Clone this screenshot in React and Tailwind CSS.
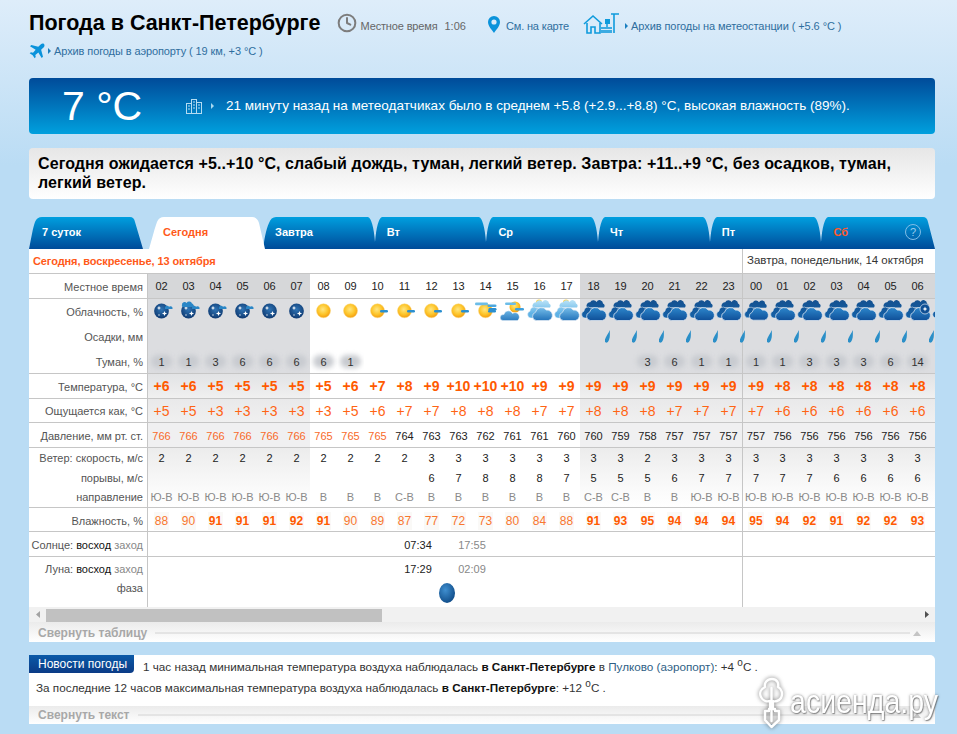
import React from 'react';
import { Clock } from 'lucide-react';

const hours = ['02','03','04','05','06','07','08','09','10','11','12','13','14','15','16','17','18','19','20','21','22','23','00','01','02','03','04','05','06','07'];
const sky = ['mc','mc2','mc','mc','m','m','s','s','sc','sc','sc','sc','sc2','sb','l','l','d','d','d','d','d','d','d','d','d','d','d','d','dm','dm'];
const fog = {0:1,1:1,2:3,3:6,4:6,5:6,6:6,7:1,18:3,19:6,20:1,21:1,22:1,23:1,24:3,25:3,26:3,27:6,28:14};
const temp = [6,6,5,5,5,5,5,6,7,8,9,10,10,10,9,9,9,9,9,9,9,9,9,8,8,8,8,8,8,8];
const feels = [5,5,3,3,3,3,3,5,6,7,7,8,8,8,7,7,8,8,8,7,7,7,7,6,6,6,6,6,6,6];
const press = [766,766,766,766,766,766,765,765,765,764,763,763,762,761,761,760,760,759,758,757,757,757,757,756,756,756,756,756,756,756];
const speed = [2,2,2,2,2,2,2,2,2,2,3,3,3,3,3,3,3,3,2,3,3,3,3,3,3,3,3,3,3,3];
const gust = ['','','','','','','','','','',6,7,8,8,8,7,5,5,5,6,7,7,7,7,7,6,6,6,6,6];
const dirs = ['Ю-В','Ю-В','Ю-В','Ю-В','Ю-В','Ю-В','В','В','В','С-В','В','В','В','В','В','В','С-В','С-В','В','В','Ю-В','Ю-В','Ю-В','Ю-В','Ю-В','Ю-В','Ю-В','Ю-В','Ю-В','Ю-В'];
const hum = [88,90,91,91,91,92,91,90,89,87,77,72,73,80,84,88,91,93,95,94,94,94,95,94,92,91,92,92,93,93];

const isNight = (i) => i < 6 || i >= 16;

function Defs() {
  return (
    <svg width="0" height="0" className="block h-0 w-0">
      <defs>
        <radialGradient id="sun" cx="45%" cy="40%" r="60%">
          <stop offset="0" stopColor="#ffe680" />
          <stop offset="0.6" stopColor="#fdc52a" />
          <stop offset="1" stopColor="#f49c10" />
        </radialGradient>
        <radialGradient id="moon" cx="50%" cy="40%" r="60%">
          <stop offset="0" stopColor="#2f74b5" />
          <stop offset="1" stopColor="#0f3a72" />
        </radialGradient>
        <linearGradient id="dk" gradientUnits="userSpaceOnUse" x1="0" y1="2" x2="0" y2="24">
          <stop offset="0" stopColor="#14508f" />
          <stop offset="1" stopColor="#1565ad" />
        </linearGradient>
        <linearGradient id="dk2" gradientUnits="userSpaceOnUse" x1="0" y1="9" x2="0" y2="24">
          <stop offset="0" stopColor="#2f8bd0" />
          <stop offset="1" stopColor="#0d4b94" />
        </linearGradient>
        <linearGradient id="lt" gradientUnits="userSpaceOnUse" x1="0" y1="2" x2="0" y2="16">
          <stop offset="0" stopColor="#bfe6f8" />
          <stop offset="1" stopColor="#5fb2e6" />
        </linearGradient>
        <linearGradient id="lt2" gradientUnits="userSpaceOnUse" x1="0" y1="9" x2="0" y2="24">
          <stop offset="0" stopColor="#7cc4ee" />
          <stop offset="1" stopColor="#1d6db6" />
        </linearGradient>
        <radialGradient id="ball" cx="40%" cy="35%" r="70%">
          <stop offset="0" stopColor="#3f8fd0" />
          <stop offset="1" stopColor="#0e4a86" />
        </radialGradient>
      </defs>
    </svg>
  );
}

function Spark({ x, y, r }) {
  const k = r * 0.28;
  return <path d={`M${x} ${y - r}L${x + k} ${y - k}L${x + r} ${y}L${x + k} ${y + k}L${x} ${y + r}L${x - k} ${y + k}L${x - r} ${y}L${x - k} ${y - k}Z`} fill="#fff" />;
}

function SmallBar({ x, y, w = 8, c = '#2a8fd0' }) {
  return <rect x={x} y={y} width={w} height="2.6" rx="1.3" fill={c} />;
}

function Cloud({ a, b }) {
  return (
    <g transform="translate(0 -1.5)">
      <path d="M7 10a3.4 3.4 0 0 1 3.2-5.2a3.6 3.6 0 0 1 6.4-.4a3.4 3.4 0 0 1 6.4 1.6a2.8 2.8 0 0 1 1 4Z" fill={a} />
      <path d="M5 20.5a3.5 3.5 0 0 1-1-6.8a4 4 0 0 1 6.6-3.2h5V20.5Z" fill={a} stroke="#e8eef5" strokeWidth="0.5" />
      <path d="M10.5 23a4.2 4.2 0 0 1-1-8.2a6 6 0 0 1 10.8-2.2a5.3 5.3 0 0 1 2 10.4Z" fill={b} stroke="#e8eef5" strokeWidth="0.7" />
    </g>
  );
}

function Sky({ t }) {
  return (
    <svg viewBox="0 0 27 25" className="block h-[25px] w-[27px]" aria-hidden="true">
      {(t === 'm' || t === 'mc' || t === 'mc2') && (
        <g>
          <circle cx="13.5" cy="12" r="7.4" fill="url(#moon)" />
          <Spark x={11} y={9} r={2.2} />
          <Spark x={16.5} y={14.5} r={2.6} />
          <Spark x={11} y={16} r={1.2} />
        </g>
      )}
      {(t === 'mc' || t === 'mc2') && <path d="M17 8.5a2.2 2.2 0 0 1 4-.8a2.2 2.2 0 0 1 3.5 2.3h-7.5Z" fill="#2a86c6" />}
      {t === 'mc2' && <path d="M7 6a2.6 2.6 0 0 1 4.6-2a3 3 0 0 1 5.4.6a2 2 0 0 1 1 3.4H7.5a1.5 1.5 0 0 1-.5-2Z" fill="#2a86c6" />}
      {(t === 's' || t === 'sc' || t === 'sc2') && <circle cx="13.5" cy="11.8" r="7" fill="url(#sun)" stroke="#fbd979" strokeWidth="0.5" />}
      {(t === 'sc' || t === 'sc2') && <SmallBar x="16" y="11" w="8" />}
      {t === 'sc2' && <g><SmallBar x="3" y="3.6" w="13" c="#6cbde8" /><SmallBar x="15.5" y="5.5" w="9" c="#4ba6dd" /><SmallBar x="16.5" y="9" w="8" /></g>}
      {t === 'sb' && (
        <g>
          <circle cx="16" cy="8" r="5.5" fill="url(#sun)" />
          <SmallBar x="6" y="3.5" w="11" c="#6cbde8" />
          <SmallBar x="16" y="9" w="9" c="#3fa0dc" />
          <path d="M4 21.5a3 3 0 0 1 .5-6h.5a4.5 4.5 0 0 1 8.5-1a4 4 0 0 1 5 7Z" fill="url(#lt2)" stroke="#fff" strokeWidth="0.4" />
        </g>
      )}
      {t === 'l' && (
        <g>
          <circle cx="13" cy="3.5" r="3" fill="#fcd24a" />
          <Cloud a="url(#lt)" b="url(#lt2)" />
        </g>
      )}
      {(t === 'd' || t === 'dm') && (
        <g>
          <Cloud a="url(#dk)" b="url(#dk2)" />
          {t === 'dm' && <g><circle cx="21" cy="10" r="5" fill="#0f4f94" stroke="#dfe7f0" strokeWidth="0.7" /><Spark x={21} y={10} r={2.4} /></g>}
        </g>
      )}
    </svg>
  );
}

function Tri({ c = '#1a7fc0' }) {
  return (
    <svg viewBox="0 0 3 6" className="h-[6px] w-[3px] shrink-0" aria-hidden="true">
      <path d="M0 0L3 3L0 6Z" fill={c} />
    </svg>
  );
}

function Row({ label, h, bg, last, cell, pad = '', lpad = '', showLast = false }) {
  return (
    <div className={`flex ${h} ${last ? 'border-b border-[#c6c6c6]' : ''}`}>
      <div className={`flex w-[119px] shrink-0 items-center justify-end whitespace-nowrap border-r border-[#c6c6c6] bg-white pr-[4px] text-[11px] text-[#555] ${lpad}`}>
        {label}
      </div>
      {hours.map((_, i) => (
        <div
          key={i}
          className={`relative flex w-[27px] shrink-0 items-center justify-center whitespace-nowrap ${pad} ${isNight(i) ? bg : 'bg-white'} ${i === 22 ? 'border-l border-[#c6c6c6]' : ''}`}
        >
          {i === 29 && !showLast ? null : cell(i)}
        </div>
      ))}
    </div>
  );
}

function Collapse({ text, h }) {
  return (
    <div className={`flex items-center bg-gradient-to-b from-[#ebebeb] to-white pl-[9px] pr-[14px] ${h}`}>
      <span className="whitespace-nowrap text-[12px] font-bold text-[#a8a8a8]">{text}</span>
      <span className="ml-[8px] h-[2px] flex-1 border-y border-[#e4e4e4] bg-white" />
      <svg viewBox="0 0 8 5" className="ml-[3px] h-[5px] w-[8px]" aria-hidden="true"><path d="M0 5L4 0L8 5Z" fill="#c4c4c4" /></svg>
    </div>
  );
}

export default function App() {
  return (
    <div className="relative h-[734px] w-[957px] overflow-hidden bg-[linear-gradient(#deedfa,#badcf4_165px)] pl-[29px] pr-[22px] pt-[10px] font-['Liberation_Sans',Arial,sans-serif] text-[#222]">
      <Defs />
      <div className="flex h-[26px] items-center whitespace-nowrap">
        <h1 className="text-[21.5px] font-bold leading-[26px] text-black">Погода в Санкт-Петербурге</h1>
        <Clock className="ml-[16px] h-[20px] w-[20px] text-[#7d7d7d]" strokeWidth={2.4} />
        <span className="ml-[4px] mt-[7px] text-[11px] tracking-[-0.15px] text-[#666]">Местное время</span>
        <span className="ml-[7px] mt-[7px] text-[11px] text-[#666]">1:06</span>
        <svg viewBox="0 0 12 17" className="ml-[22px] mt-[2px] h-[17px] w-[12px]" aria-hidden="true">
          <path fillRule="evenodd" d="M6 0a6 6 0 0 1 6 6c0 4-4 8-6 11C4 14 0 10 0 6a6 6 0 0 1 6-6Zm0 3.4a2.6 2.6 0 1 0 0 5.2a2.6 2.6 0 0 0 0-5.2Z" fill="#0a93db" />
        </svg>
        <span className="ml-[6px] mt-[7px] text-[11px] tracking-[-0.15px] text-[#2f6e9e]">См. на карте</span>
        <svg viewBox="0 0 38 21" className="ml-[14px] mt-[1px] h-[21px] w-[38px]" aria-hidden="true">
          <g fill="none" stroke="#0f9bdc" strokeWidth="1.6">
            <path d="M1 11L10 3L19 11" />
            <path d="M4 10V20H8V14H12V20H17V10" />
            <path d="M31 1V20M28 1H36" />
          </g>
          <rect x="22" y="6" width="5" height="5" fill="#0f9bdc" />
          <path d="M24 11V14" stroke="#0f9bdc" strokeWidth="1.5" />
          <g fill="#3cabe2"><rect x="18" y="14" width="11" height="2" /><rect x="18" y="17" width="11" height="3" /></g>
        </svg>
        <span className="ml-[4px] mt-[6px]"><Tri /></span>
        <span className="ml-[3px] mt-[7px] text-[11px] tracking-[-0.08px] text-[#2f6e9e]">Архив погоды на метеостанции ( +5.6 °C )</span>
      </div>

      <div className="mt-[8px] flex h-[14px] items-center whitespace-nowrap">
        <svg viewBox="0 0 24 24" className="h-[16px] w-[16px]" aria-hidden="true">
          <path d="M22.5 1.5c-1.2-1.2-3.4-.9-4.6.3l-4 4L3.5 3L1.5 5l8.5 5l-4 4.5l-3-.6L1 15.5l4.5 3L8.5 23l1.6-1.9l-.6-3l4.5-4l5 8.5l2-2l-2.8-10.4l4-4c1.2-1.2 1.5-3.4.3-4.7Z" fill="#0a93db" />
        </svg>
        <span className="ml-[3px]"><Tri /></span>
        <span className="ml-[3px] text-[11px] tracking-[-0.1px] text-[#2f6e9e]">Архив погоды в аэропорту ( 19 км, +3 °C )</span>
      </div>

      <div className="mt-[20px] flex h-[56px] items-center whitespace-nowrap rounded-[4px] bg-gradient-to-b from-[#004b99] to-[#00a0de] text-white">
        <span className="ml-[33px] w-[124px] text-[41px] leading-none">7 °C</span>
        <svg viewBox="0 0 16 15" className="h-[15px] w-[16px]" aria-hidden="true">
          <g fill="none" stroke="#b4dcf2" strokeWidth="1">
            <rect x="0.5" y="4.5" width="5" height="10" />
            <rect x="5.5" y="0.5" width="5" height="14" />
            <rect x="10.5" y="3.5" width="5" height="11" />
            <path d="M2 7h2M2 10h2M7 3h2M7 6h2M7 9h2M12 6h2M12 9h2" />
          </g>
        </svg>
        <span className="ml-[9px]"><Tri c="#a8d8f0" /></span>
        <span className="ml-[12px] text-[13.5px]">21 минуту назад на метеодатчиках было в среднем +5.8 (+2.9...+8.8) °C, высокая влажность (89%).</span>
      </div>

      <div className="mt-[14px] h-[51px] rounded-[4px] bg-gradient-to-b from-[#e6e6e6] to-white px-[9px] pt-[6px] text-[16px] font-bold leading-[19px] tracking-[0.09px] text-black">
        Сегодня ожидается +5..+10 °C, слабый дождь, туман, легкий ветер. Завтра: +11..+9 °C, без осадков, туман, легкий ветер.
      </div>

      <div className="mt-[18px] flex h-[32px] text-[11px] font-bold">
        <div className="flex w-[114px] shrink-0 items-center bg-gradient-to-b from-[#009fdf] to-[#004b99] pb-[2px] pl-[13px] text-white [clip-path:path('M0_32C2_22_4_10_6_5Q8_0_13_0L101_0Q105_0_106_5L114_32Z')]">
          7 суток
        </div>
        <div className="relative z-10 ml-[6px] flex w-[116px] shrink-0 items-center bg-white pb-[2px] pl-[14px] text-[#ff5a1a] [clip-path:path('M0_32C3_22_6_10_8_5Q10_0_15_0L103_0Q108_0_110_6L116_32Z')]">
          Сегодня
        </div>
        <div className="-ml-[2px] flex flex-1 bg-gradient-to-b from-[#009fdf] to-[#004b99] text-white [clip-path:path('M0_32C1_24_3_12_6_6Q8_0_13_0L660_0Q664_0_665_5L672_32Z')]">
          {['Завтра', 'Вт', 'Ср', 'Чт', 'Пт', 'Сб'].map((t, i) => (
            <div key={t} className={`relative flex items-center pb-[2px] pl-[12px] ${i === 5 ? 'flex-1' : 'w-[111.7px]'}`}>
              <span className={i === 5 ? 'text-[#ff5a2a]' : ''}>{t}</span>
              {i < 5 && (
                <svg viewBox="0 0 14 25" className="absolute -right-[7px] top-0 h-[25px] w-[14px]" aria-hidden="true">
                  <path d="M0 0Q5 2 7 25Q9 2 14 0Z" fill="#badcf4" />
                </svg>
              )}
              {i === 5 && (
                <span className="absolute right-[14px] top-[7px] flex h-[16px] w-[16px] items-center justify-center rounded-full border border-[#7fbde6] text-[11px] font-normal text-[#9ccbec]">?</span>
              )}
            </div>
          ))}
        </div>
      </div>

      <div className="overflow-hidden bg-white">
        <div className="flex h-[25px] items-center border-b border-[#c6c6c6]">
          <div className="w-[713px] shrink-0 whitespace-nowrap pl-[4px] text-[11px] font-bold tracking-[-0.1px] text-[#ff5a1a]">Сегодня, воскресенье, 13 октября</div>
          <div className="flex h-full flex-1 items-center whitespace-nowrap border-l border-[#c6c6c6] pl-[4px] text-[11.5px] text-[#333]">Завтра, понедельник, 14 октября</div>
        </div>

        <Row label="Местное время" h="h-[25px]" last lpad="pt-[2px]" bg="bg-[#d6d7d9]" cell={(i) => <span className="text-[11px] text-[#222]">{hours[i]}</span>} />
        <Row label="Облачность, %" h="h-[25px]" lpad="pt-[2px]" showLast bg="bg-[#dcdde0]" cell={(i) => <Sky t={sky[i]} />} />
        <Row label="Осадки, мм" h="h-[25px]" lpad="pt-[2px]" bg="bg-[#dcdde0]" cell={(i) =>
          i >= 16 && i <= 28 ? (
            <svg viewBox="0 0 6 13" className="relative z-10 h-[13px] w-[6px] translate-x-[13.5px]" aria-hidden="true">
              <path d="M5.5 0C5 3 6 6 4.5 10Q3.5 13 1.5 12.6Q0 12 .5 9.5C1 7 4 3 5.5 0Z" fill="#2b8fc8" />
            </svg>
          ) : null
        } />
        <Row label="Туман, %" h="h-[25px]" last lpad="pt-[2px]" pad="pt-[2px]" bg="bg-[#dcdde0]" cell={(i) =>
          fog[i] ? (
            <>
              <span className="absolute left-[3px] right-[3px] top-[6px] h-[13px] rounded-full bg-[#c8cbd0] blur-[2.5px]" />
              <span className="relative text-[11px] text-[#333]">{fog[i]}</span>
            </>
          ) : null
        } />
        <Row label="Температура, °C" h="h-[25px]" last lpad="pt-[2px]" pad="pt-[1px]" bg="bg-gradient-to-b from-[#e2e3e5] to-[#f0f0f0]" cell={(i) => <span className="text-[14px] font-bold text-[#ff5a00]">+{temp[i]}</span>} />
        <Row label="Ощущается как, °C" h="h-[24px]" last lpad="pt-[2px]" pad="pt-[2px]" bg="bg-gradient-to-b from-[#e9e9ea] to-[#f0f0f0]" cell={(i) => <span className="text-[14px] text-[#ff6414]">+{feels[i]}</span>} />
        <Row label="Давление, мм рт. ст." h="h-[25px]" last lpad="pt-[2px]" pad="pt-[2px]" bg="bg-[#f0f0f1]" cell={(i) => <span className={`text-[11px] ${press[i] > 764 ? 'text-[#f8692a]' : 'text-[#222]'}`}>{press[i]}</span>} />
        <Row label="Ветер: скорость, м/с" h="h-[20px]" bg="bg-gradient-to-b from-[#ececec] to-[#f3f3f3]" cell={(i) => <span className="text-[11px] text-[#222]">{speed[i]}</span>} />
        <Row label="порывы, м/с" h="h-[20px]" bg="bg-gradient-to-b from-[#f3f3f3] to-[#fafafa]" cell={(i) => <span className="text-[11px] text-[#222]">{gust[i]}</span>} />
        <Row label="направление" h="h-[20px]" last bg="bg-gradient-to-b from-[#fafafa] to-white" cell={(i) => <span className="text-[11px] text-[#8a8a8a]">{dirs[i]}</span>} />
        <Row label="Влажность, %" h="h-[24px]" last lpad="pt-[3px]" pad="pt-[2px]" bg="bg-white" cell={(i) => (
          <span className={`bg-[#faf9f7] px-[1px] text-[12px] ${hum[i] >= 91 ? 'font-bold text-[#ff5a00]' : 'text-[#f8772f]'}`}>{hum[i]}</span>
        )} />

        <div className="flex h-[25px] border-b border-[#c6c6c6]">
          <div className="flex w-[119px] shrink-0 items-center justify-end gap-[3px] whitespace-nowrap border-r border-[#c6c6c6] pr-[4px] pt-[2px] text-[11px] text-[#555]">
            <span>Солнце:</span><span className="text-[#111]">восход</span><span className="text-[#888]">заход</span>
          </div>
          <div className="flex w-[594px] shrink-0 items-center pl-[243px] pt-[2px] text-[11px]">
            <span className="w-[54px] text-center text-[#222]">07:34</span>
            <span className="w-[54px] text-center text-[#888]">17:55</span>
          </div>
          <div className="flex-1 border-l border-[#c6c6c6]" />
        </div>
        <div className="flex h-[50px]">
          <div className="w-[119px] shrink-0 border-r border-[#c6c6c6] pr-[4px] text-right text-[11px] text-[#555]">
            <div className="flex h-[24px] items-center justify-end gap-[3px] whitespace-nowrap">
              <span>Луна:</span><span className="text-[#111]">восход</span><span className="text-[#888]">заход</span>
            </div>
            <div className="leading-[14px]">фаза</div>
          </div>
          <div className="w-[594px] shrink-0 pl-[243px] text-[11px]">
            <div className="flex h-[24px] items-center">
              <span className="w-[54px] text-center text-[#222]">17:29</span>
              <span className="w-[54px] text-center text-[#888]">02:09</span>
            </div>
            <svg viewBox="0 0 16 20" className="ml-[48px] mt-[2px] h-[20px] w-[16px]" aria-hidden="true">
              <ellipse cx="8" cy="10" rx="8" ry="10" fill="url(#ball)" />
            </svg>
          </div>
          <div className="flex-1 border-l border-[#c6c6c6]" />
        </div>

        <div className="flex h-[15px] bg-[#f1f1f1]">
          <div className="flex w-[17px] items-center justify-center">
            <svg viewBox="0 0 4 7" className="h-[7px] w-[4px]" aria-hidden="true"><path d="M4 0L0 3.5L4 7Z" fill="#a3a3a3" /></svg>
          </div>
          <div className="h-[13px] w-[336px] self-end bg-[#c1c1c1]" />
          <div className="ml-auto flex w-[17px] items-center justify-center">
            <svg viewBox="0 0 4 7" className="h-[7px] w-[4px]" aria-hidden="true"><path d="M0 0L4 3.5L0 7Z" fill="#505050" /></svg>
          </div>
        </div>
        <Collapse text="Свернуть таблицу" h="h-[20px] pt-[2px]" />
      </div>

      <div className="mt-[13px] rounded-tr-[5px] bg-white text-[11.7px] text-[#333]">
        <div className="flex h-[22px] whitespace-nowrap">
          <div className="flex h-[18px] w-[105px] shrink-0 items-center rounded-br-[4px] bg-gradient-to-b from-[#0b5aa8] to-[#0b3b86] pl-[9px] text-[12px] text-white">Новости погоды</div>
          <div className="ml-[9px] mt-[5px] leading-[14px]">
            1 час назад минимальная температура воздуха наблюдалась <b className="text-[#111]">в Санкт-Петербурге</b> в <span className="text-[#2f5f86]">Пулково (аэропорт)</span>: +4 <sup className="text-[10px]">o</sup>C .
          </div>
        </div>
        <div className="h-[29px] whitespace-nowrap pl-[7px] pt-[4px] leading-[14px]">
          За последние 12 часов максимальная температура воздуха наблюдалась <b className="text-[#111]">в Санкт-Петербурге</b>: +12 <sup className="text-[10px]">o</sup>C .
        </div>
        <Collapse text="Свернуть текст" h="h-[18px]" />
      </div>

      <div className="pointer-events-none absolute left-[757px] top-[676px] flex items-start">
        <svg viewBox="0 0 30 54" className="h-[54px] w-[30px] drop-shadow-[0_0_2px_rgba(70,70,70,.75)]" aria-hidden="true">
          <g fill="none" stroke="#fff" strokeWidth="2.4" strokeLinecap="round" strokeLinejoin="round">
            <path d="M15 3c5 0 7 4 6 8c4 2 5 7 3 11c-2 3-6 4-8 3v8h-3v-8c-3 1-7 0-9-4c-2-4 0-8 4-10c-1-4 2-8 7-8Z" />
            <path d="M14.5 12v21" />
            <path d="M8 35h4v-2h6v2h4v9l-7.500 7l-6.500-7Z" />
            <path d="M14.500 35v10" />
          </g>
        </svg>
        <span className="ml-[3px] mt-[1px] origin-left scale-x-[0.84] whitespace-nowrap text-[34px] leading-[48px] text-white [text-shadow:0_0_3px_rgba(70,70,70,.7),1px_1px_1px_rgba(90,90,90,.6)]">асиенда.ру</span>
      </div>
    </div>
  );
}
